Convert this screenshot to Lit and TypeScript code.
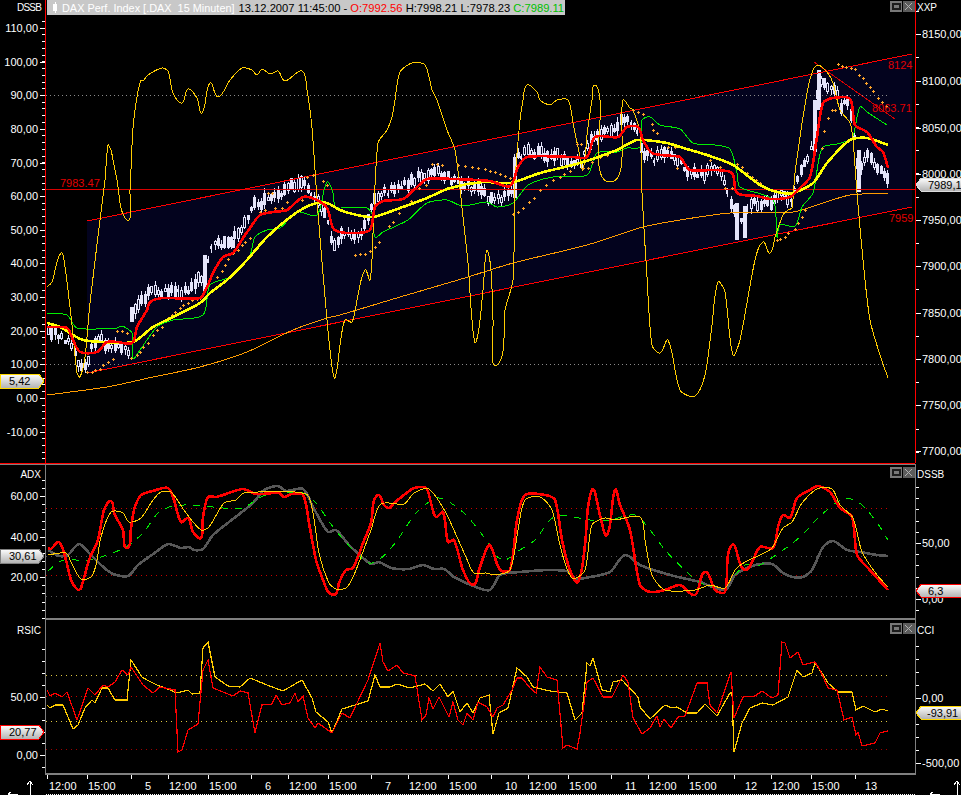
import { LitElement, html, svg, css } from 'lit';
import { customElement } from 'lit/decorators.js';

// all series are flat x,y lists in page pixels, read off the screenshot
const CHANNEL = [87, 221, 912, 54, 912, 207, 87, 373];

const CANDLE_MID = [47,333,60,335,70,345,77,366,85,362,92,345,100,340,115,350,122,345,128,355,130,313,135,307,147,293,173,290,187,292,203,273,210,245,223,245,240,230,253,203,267,202,293,185,303,183,317,200,327,223,333,250,337,238,347,233,353,240,363,228,372,200,383,193,400,188,417,177,430,173,440,173,453,180,473,188,487,197,497,198,510,193,513,160,527,152,553,155,567,160,580,165,588,143,597,133,613,130,623,117,637,130,640,150,653,160,663,153,677,158,683,170,697,175,713,170,720,177,735,217,742,223,745,207,757,202,770,205,780,193,790,200,795,180,808,157,813,117,818,80,827,87,835,90,840,107,848,103,852,130,857,170,867,153,878,172,887,180];
const TALL = [[203,255,291],[513,158,198],[735,203,240],[743,206,238],[813,100,152],[817,70,110],[857,150,192],[130,307,322],[231,240,248]];

const OSC = [47,287,52,282,61,253,65,267,72,325,77,373,80,377,85,357,90,303,100,220,105,180,108,145,111,150,113,160,117,180,127,220,130,190,133,128,137,97,141,80,143,81,148,75,162,68,168,71,173,93,182,103,188,89,197,98,202,113,210,83,218,97,230,80,242,68,252,70,257,75,262,69,270,74,278,71,285,81,302,71,307,90,312,128,318,213,327,320,332,367,335,378,340,345,345,320,352,322,358,295,365,270,370,280,373,233,378,143,387,130,392,117,395,100,400,72,412,63,425,65,432,90,437,100,447,130,455,150,463,217,468,263,472,320,476,342,483,290,488,252,493,320,497,365,505,310,513,280,515,183,520,120,523,100,527,85,537,92,540,100,550,105,557,100,568,100,573,123,580,157,583,170,587,135,592,100,595,85,600,100,610,182,623,100,630,108,633,110,640,133,642,193,647,277,652,345,660,353,668,340,680,390,695,396,705,375,712,325,718,282,725,292,733,355,740,340,755,260,763,242,770,253,775,237,783,215,788,210,792,208,795,173,807,93,813,70,818,65,827,72,833,83,840,110,850,123,853,140,857,193,863,260,870,320,880,355,888,378];

const MA_RED = [47,327,67,328,73,340,80,352,97,352,107,342,117,342,132,343,137,327,147,310,150,302,163,298,200,298,207,287,213,273,223,257,233,253,243,238,250,228,260,215,273,212,287,210,303,197,317,200,327,208,333,228,340,232,357,233,370,230,375,207,383,201,403,199,417,187,427,179,453,179,490,181,510,186,518,167,527,157,573,157,587,157,595,137,618,137,627,127,638,127,643,140,652,153,673,156,680,157,690,170,713,170,732,173,737,193,757,196,770,199,790,197,800,188,810,177,817,137,823,103,833,98,850,99,855,125,867,132,877,147,883,152,888,168];
const MA_YELLOW = [47,323,60,327,73,335,83,340,103,342,133,342,153,327,173,317,200,303,210,293,227,280,247,260,267,237,293,215,313,204,327,203,340,210,357,215,373,217,400,208,427,198,450,188,483,182,510,183,540,173,580,163,617,150,637,140,667,143,680,147,707,155,733,165,760,185,777,192,793,193,813,183,827,163,850,140,867,138,888,145];
const MA_GREEN = [47,313,67,315,77,328,117,328,122,326,132,333,133,358,140,350,157,327,173,320,203,315,210,285,230,277,250,255,255,237,267,230,280,228,297,212,317,215,327,182,333,193,335,207,340,208,367,208,373,217,375,237,383,232,408,220,427,203,447,200,462,206,487,202,497,207,513,203,528,185,553,177,587,175,597,153,617,152,627,148,640,147,642,120,650,117,660,125,680,129,693,143,715,145,730,149,737,173,740,187,773,200,777,237,780,225,795,226,802,207,813,193,822,148,837,144,852,138,860,107,867,112,887,125];
const MA_ORANGE = [47,395,107,387,153,377,200,367,247,352,293,330,327,318,340,315,400,297,458,280,468,277,513,263,587,245,643,227,680,220,730,213,793,212,823,203,850,195,888,193];

const SAR = [87,372,92,372,95,370,100,369,103,365,108,362,113,359,117,331,122,331,127,333,131,358,137,355,140,352,143,347,148,343,153,335,157,330,162,327,168,318,172,315,175,312,180,308,183,305,188,303,192,300,197,299,200,298,217,277,222,271,225,265,228,259,233,253,238,250,242,245,245,242,250,238,260,212,265,210,275,208,282,208,287,202,302,200,268,193,272,193,307,177,313,175,323,181,327,185,355,255,360,254,365,254,370,251,375,247,379,242,389,226,393,222,399,213,405,206,411,201,419,188,426,185,432,164,437,164,442,165,458,165,465,166,472,167,478,168,485,169,490,171,495,172,500,174,505,176,510,178,513,214,518,212,523,208,529,202,534,198,540,190,546,185,553,180,560,177,564,174,570,171,583,168,588,168,592,162,600,157,607,155,577,144,581,144,633,110,638,112,643,114,652,124,653,130,657,133,665,142,668,147,675,147,677,168,710,160,720,167,725,188,732,188,737,164,742,167,747,173,752,177,756,180,760,183,777,240,780,239,785,237,788,233,795,229,798,223,802,217,805,210,822,148,824,131,828,118,832,110,835,110,838,64,842,66,846,67,851,68,855,69,859,75,863,78,866,83,870,87,873,91,878,98,882,102,886,106];

const ADX_RED = [48,548,51,549,59,542,66,560,71,580,78,590,81,588,89,560,98,540,104,510,111,501,114,513,123,530,127,548,131,528,134,510,141,495,153,491,168,488,174,500,181,522,188,518,193,532,201,538,203,517,208,497,216,497,223,495,243,489,256,494,279,493,284,497,291,494,303,495,309,523,316,560,323,580,329,593,336,594,339,583,346,570,353,568,363,543,371,523,374,500,379,495,384,505,389,508,394,503,404,495,414,488,426,488,431,503,436,517,443,512,448,542,454,540,463,570,473,585,479,570,486,550,490,545,500,570,510,570,517,520,525,495,545,495,555,500,562,540,570,570,578,582,585,545,592,490,600,515,607,535,615,490,620,505,630,530,640,585,650,592,665,590,680,585,695,595,705,572,715,590,725,592,732,545,745,570,760,547,773,548,778,527,783,515,790,518,797,498,810,490,818,486,830,492,840,508,852,517,857,555,868,568,877,578,888,590];
const ADX_YELLOW = [48,555,66,553,71,562,81,579,91,577,96,565,101,537,111,512,123,513,129,522,141,518,153,500,161,492,171,492,186,513,201,530,209,527,224,503,236,500,244,493,306,494,313,513,319,553,329,583,336,589,346,588,354,575,371,530,381,504,404,504,414,493,429,489,446,513,453,528,466,557,474,573,486,573,495,575,510,570,518,530,525,500,540,497,552,510,560,545,572,578,585,570,592,525,605,518,615,520,640,517,645,540,652,575,665,590,695,590,710,585,725,588,735,570,745,562,760,555,772,548,783,528,792,522,802,503,817,489,832,489,840,505,853,518,862,552,877,575,888,587];
const ADX_GREEN = [48,571,59,562,69,559,84,561,104,556,126,547,143,533,159,512,173,506,193,505,223,508,243,508,259,498,273,493,303,493,316,503,333,527,353,550,369,563,379,560,396,542,416,513,436,498,449,502,466,515,486,540,495,555,505,560,520,550,535,540,550,520,560,515,590,520,610,520,635,515,650,530,665,550,690,575,705,585,725,585,745,565,760,565,770,559,783,550,793,543,807,530,818,518,833,505,843,499,855,500,867,510,880,527,888,540];
const ADX_GRAY = [48,550,59,556,68,555,79,544,89,553,101,565,113,574,128,576,138,565,156,552,168,544,181,548,189,547,194,550,203,549,213,535,229,522,253,503,264,490,278,486,286,491,303,489,313,507,328,532,336,530,349,545,371,564,379,562,391,568,409,569,423,565,434,569,444,569,454,577,476,587,490,590,500,575,520,572,550,570,570,572,575,579,585,578,610,572,625,555,640,565,670,575,700,582,725,590,735,575,755,565,772,564,783,573,793,577,803,577,812,570,823,547,833,541,847,550,860,552,877,555,888,556];

const RSI_YELLOW = [47,705,50,708,55,705,63,705,73,729,78,725,85,708,92,700,95,703,102,688,108,688,115,700,127,700,131,660,142,677,147,680,157,685,170,690,177,693,188,690,192,694,200,693,203,648,208,642,215,677,228,686,240,687,250,678,267,685,283,691,302,680,312,698,316,712,328,722,332,733,342,709,355,705,368,701,375,675,380,687,390,687,397,684,410,688,425,684,433,691,440,684,448,697,453,691,460,712,467,703,473,713,480,698,489,695,493,734,499,713,508,708,517,668,527,677,533,687,550,691,567,693,575,720,582,713,587,663,590,666,593,658,602,690,610,692,613,682,622,680,638,697,640,707,650,719,665,705,672,708,677,707,687,713,697,713,705,704,717,716,730,693,732,693,734,752,742,723,750,708,762,703,773,705,788,697,797,670,803,677,812,673,815,663,822,673,828,683,838,692,852,692,856,710,863,706,875,712,882,709,888,711];
const RSI_RED = [47,690,50,696,55,693,62,697,67,692,77,720,88,688,95,695,103,685,108,687,115,682,122,670,128,675,131,667,143,685,153,693,160,687,175,690,178,752,182,750,188,730,198,724,203,670,208,660,213,688,233,696,240,691,248,693,255,733,262,705,272,704,276,695,282,705,290,703,295,693,298,702,303,696,308,718,315,728,318,723,332,733,342,713,350,718,357,703,368,680,380,643,383,662,388,671,397,665,403,673,415,676,422,720,426,715,429,698,433,709,439,697,449,717,453,702,458,720,463,725,467,713,473,720,478,702,487,707,493,717,497,708,503,705,512,690,517,678,522,678,530,688,536,693,540,667,547,677,557,680,563,748,567,745,577,749,580,733,587,682,593,678,603,697,612,697,623,675,628,682,633,718,642,734,650,728,657,716,660,727,664,719,671,728,678,717,685,716,697,683,707,683,710,705,717,713,731,672,734,718,743,697,755,696,762,691,772,698,778,695,782,642,785,643,790,658,798,652,803,665,815,662,820,670,828,688,837,690,844,720,852,717,856,735,858,732,862,746,875,743,880,733,888,731];

const TIME_LABELS: [number, number, string][] = [
  [47, 49, '12:00'], [87, 88, '15:00'], [131, 145, '5'],
  [168, 169, '12:00'], [208, 209, '15:00'], [251, 265, '6'],
  [288, 289, '12:00'], [328, 329, '15:00'], [371, 385, '7'],
  [408, 409, '12:00'], [448, 449, '15:00'], [491, 505, '10'],
  [528, 529, '12:00'], [568, 569, '15:00'], [611, 625, '11'],
  [648, 649, '12:00'], [688, 689, '15:00'], [734, 745, '12'],
  [771, 772, '12:00'], [811, 812, '15:00'], [855, 865, '13'],
];

function flat(d: number[]) {
  const out: string[] = [];
  for (let i = 0; i < d.length; i += 2) out.push(d[i] + ',' + d[i + 1]);
  return out.join(' ');
}

// rounds off the hand read points, tangent length follows the segment so spikes don't overshoot
function smooth(d: number[]) {
  const n = d.length / 2;
  const tan = (i: number, len: number) => {
    const a = Math.max(i - 1, 0);
    const b = Math.min(i + 1, n - 1);
    const dx = d[b * 2] - d[a * 2];
    const dy = d[b * 2 + 1] - d[a * 2 + 1];
    const l = Math.hypot(dx, dy) || 1;
    return [(dx / l) * len * 0.25, (dy / l) * len * 0.25];
  };
  let p = `M${d[0]} ${d[1]}`;
  for (let i = 0; i < n - 1; i++) {
    const x0 = d[i * 2];
    const y0 = d[i * 2 + 1];
    const x1 = d[i * 2 + 2];
    const y1 = d[i * 2 + 3];
    const len = Math.hypot(x1 - x0, y1 - y0);
    const t0 = tan(i, len);
    const t1 = tan(i + 1, len);
    p += `C${(x0 + t0[0]).toFixed(1)} ${(y0 + t0[1]).toFixed(1)} ${(x1 - t1[0]).toFixed(1)} ${(y1 - t1[1]).toFixed(1)} ${x1} ${y1}`;
  }
  return p;
}

function yAt(d: number[], x: number) {
  for (let i = 0; i < d.length - 2; i += 2) {
    if (x <= d[i + 2]) {
      const t = (x - d[i]) / (d[i + 2] - d[i]);
      return d[i + 1] + (d[i + 3] - d[i + 1]) * t;
    }
  }
  return d[d.length - 1];
}

// evenly spaced values between two pixel rows, used for the minor ticks
function ticks(from: number, to: number, step: number) {
  const out: number[] = [];
  for (let y = from; y <= to; y += step) out.push(Math.round(y));
  return out;
}

function leftAxis(minor: number[], major: [number, string][]) {
  return svg`
    ${minor.map((y) => svg`<line class="tick" x1="42" x2="45" y1=${y} y2=${y}></line>`)}
    ${major.map(([y, t]) => svg`
      <line class="tick" x1="40" x2="45" y1=${y} y2=${y}></line>
      <text class="lbl" x="38" y=${y + 4} text-anchor="end">${t}</text>`)}`;
}

function rightAxis(minor: number[], major: [number, string][]) {
  return svg`
    ${minor.map((y) => svg`<line class="tick" x1="916" x2="919" y1=${y} y2=${y}></line>`)}
    ${major.map(([y, t]) => svg`
      <line class="tick" x1="916" x2="921" y1=${y} y2=${y}></line>
      <text class="lbl" x="922" y=${y + 4}>${t}</text>`)}`;
}

function leftTag(y: number, text: string, border: string) {
  const p = `0,${y} 39,${y} 44,${y + 7} 39,${y + 14} 0,${y + 14}`;
  return svg`<polygon points=${p} fill="url(#tag)" stroke=${border}></polygon>
    <text class="tag-text" x="9" y=${y + 11}>${text}</text>`;
}

function rightTag(y: number, text: string, textX: number, border: string) {
  const p = `961,${y} 921,${y} 916,${y + 7} 921,${y + 13} 961,${y + 13}`;
  return svg`<polygon points=${p} fill="url(#tag)" stroke=${border}></polygon>
    <text class="tag-text" x=${textX} y=${y + 11}>${text}</text>`;
}

function winButtons(y: number) {
  return svg`
    <rect class="btn" x="890" y=${y} width="12" height="11"></rect>
    <rect class="glyph" x="893" y=${y + 3} width="7" height="5"></rect>
    <rect class="btn2" x="903" y=${y} width="12" height="11"></rect>
    <path class="x-glyph" d="M905 ${y + 2}l7 7M912 ${y + 2}l-7 7"></path>`;
}

function dots(y: number, cls: string) {
  return svg`<line class=${cls} x1="46" x2="888" y1=${y} y2=${y}></line>`;
}

function candles() {
  let seed = 77;
  const rnd = () => {
    seed = (seed * 16807) % 2147483647;
    return (seed % 1000) / 1000;
  };
  const out = [];
  for (let x = 47; x < 889; x += 3.33) {
    const px = Math.round(x);
    const mid = yAt(CANDLE_MID, x) + (rnd() - 0.5) * 7;
    const h = 3 + rnd() * 9;
    const up = rnd() * 5;
    const dn = rnd() * 5;
    const w = h > 3.5 ? 3 : 2;
    out.push(svg`<rect class="wick" x=${px + 1} y=${mid - h / 2 - up} width="1" height=${h + up + dn}></rect>`);
    out.push(svg`<rect class="wick" x=${px} y=${mid - h / 2} width=${w} height=${h}></rect>`);
    if (w === 3 && rnd() < 0.35) out.push(svg`<rect class="hollow" x=${px + 1} y=${mid - h / 2 + 1} width="1" height=${Math.max(h - 2, 1)}></rect>`);
  }
  for (const [x, a, b] of TALL) {
    out.push(svg`<rect class="wick" x=${x} y=${a} width="4" height=${b - a}></rect>`);
  }
  return out;
}

const tagGradient = svg`
  <defs>
    <linearGradient id="tag" x1="0" y1="0" x2="0" y2="1">
      <stop offset="0" stop-color="#ffffff"></stop>
      <stop offset="1" stop-color="#b4b4b4"></stop>
    </linearGradient>
  </defs>`;

@customElement('app-root')
export class AppRoot extends LitElement {
  static styles = css`
    :host {
      display: block;
      width: 961px;
      height: 795px;
      background: #000;
      overflow: hidden;
      position: relative;
      font-family: 'Liberation Sans', Arial, sans-serif;
    }
    .screen {
      display: flex;
      flex-direction: column;
    }
    svg {
      display: block;
      shape-rendering: crispEdges;
    }
    /* title strip sits on top of the chart */
    .title {
      position: absolute;
      left: 47px;
      top: 0;
      width: 518px;
      height: 15px;
      background: #c8c8c8;
      display: flex;
      align-items: center;
      font-size: 11.2px;
      white-space: pre;
      color: #000;
      overflow: hidden;
    }
    .candle-icon {
      margin-left: 6px;
      margin-right: 5px;
      width: 4px;
      height: 7px;
      background: #fff;
      position: relative;
      flex: none;
    }
    .candle-icon::after {
      content: '';
      position: absolute;
      left: 1.5px;
      top: -2px;
      width: 1px;
      height: 11px;
      background: #fff;
    }
    .name { color: #fff; font-size: 10.9px; margin-right: 4px; }
    .o { color: #ff0000; }
    .c { color: #00c000; }

    text { shape-rendering: auto; }
    .lbl { font-size: 11px; fill: #fff; }
    .ttl { font-size: 10px; fill: #fff; }
    .ttl-narrow { font-size: 10px; fill: #fff; letter-spacing: -0.8px; }
    .tag-text { font-size: 11px; fill: #000; }
    .price { font-size: 11px; fill: #e00000; }
    .tick { stroke: #fff; }
    .frame-red { stroke: #ff0000; }
    .frame-gray { stroke: #808080; }
    .frame-gray2 { stroke: #808080; stroke-width: 2; }
    .band { fill: #03031e; }
    .chan { stroke: #ff0000; fill: none; }
    .chan-thin { stroke: #d80000; fill: none; }
    .dots-gray { stroke: #8a8a8a; stroke-dasharray: 1 3; }
    .dots-dark { stroke: #5a5a5a; stroke-dasharray: 1 4; }
    .dots-red { stroke: #c80000; stroke-dasharray: 1 4; }
    .dots-dkred { stroke: #a00000; stroke-dasharray: 1 4; }
    .dots-yellow { stroke: #e0c840; stroke-dasharray: 1 4; }
    .wick { fill: #e4e4fa; }
    .hollow { fill: #03031e; }
    .osc { fill: none; stroke: #ffcc00; stroke-width: 1; }
    .thin-yellow { fill: none; stroke: #ffcc00; stroke-width: 1.2; }
    .thick-red { fill: none; stroke: #ff0000; stroke-width: 2.6; stroke-linejoin: round; }
    .med-red { fill: none; stroke: #ff0000; stroke-width: 1.2; }
    .thick-yellow { fill: none; stroke: #ffff00; stroke-width: 2.6; stroke-linejoin: round; }
    .thin-green { fill: none; stroke: #00ee00; stroke-width: 1; }
    .dash-green { fill: none; stroke: #00ee00; stroke-width: 1; stroke-dasharray: 7 7; }
    .thin-orange { fill: none; stroke: #ff9c00; stroke-width: 1; }
    .thick-gray { fill: none; stroke: #585858; stroke-width: 2.6; stroke-linejoin: round; }
    .sar { fill: none; stroke: #ffa428; stroke-width: 1; }
    .btn { fill: #787878; }
    .btn2 { fill: #5c5c5c; }
    .glyph { fill: none; stroke: #1c1c1c; stroke-width: 1.5; }
    .x-glyph { fill: none; stroke: #b0b0b0; }
    .arrow { fill: none; stroke: #fff; }
    .base { stroke: #fff; stroke-dasharray: 1 1; }
  `;

  private sarMarks() {
    const out = [];
    for (let i = 0; i < SAR.length; i += 2) {
      const x = SAR[i];
      const y = SAR[i + 1];
      out.push(svg`<path class="sar" d="M${x - 1} ${y}h3M${x} ${y - 1}v3"></path>`);
    }
    return out;
  }

  private mainPanel() {
    return svg`
      <svg width="961" height="464" viewBox="0 0 961 464">
        ${tagGradient}
        <polygon class="band" points=${flat(CHANNEL)}></polygon>
        ${dots(95, 'dots-gray')}
        ${dots(364, 'dots-gray')}
        ${candles()}
        <line class="chan-thin" x1="46" x2="915" y1="189" y2="189"></line>
        <line class="chan" x1="87" y1="221" x2="912" y2="54"></line>
        <line class="chan" x1="87" y1="373" x2="912" y2="207"></line>
        <line class="chan-thin" x1="814" y1="62" x2="895" y2="119"></line>
        <path class="thin-orange" d=${smooth(MA_ORANGE)}></path>
        <path class="thin-green" d=${smooth(MA_GREEN)}></path>
        <path class="osc" d=${smooth(OSC)}></path>
        ${this.sarMarks()}
        <path class="thick-yellow" d=${smooth(MA_YELLOW)}></path>
        <path class="thick-red" d=${smooth(MA_RED)}></path>
        <text class="price" x="60" y="187">7983.47</text>
        <text class="price" x="888" y="69">8124</text>
        <text class="price" x="872" y="112">8063.71</text>
        <text class="price" x="889" y="222">7959</text>
        <line class="frame-red" x1="45" x2="45" y1="0" y2="463"></line>
        <line class="frame-red" x1="915" x2="915" y1="0" y2="463"></line>
        <line class="frame-red" x1="0" x2="915" y1="463" y2="463"></line>
        ${leftAxis(
          ticks(21, 460, 6.73),
          [[28,'110,00'],[62,'100,00'],[95,'90,00'],[129,'80,00'],[163,'70,00'],[196,'60,00'],[230,'50,00'],[263,'40,00'],[297,'30,00'],[331,'20,00'],[364,'10,00'],[398,'0,00'],[432,'-10,00']],
        )}
        ${rightAxis(
          ticks(11, 460, 23.2),
          [[34,'8150,00'],[81,'8100,00'],[128,'8050,00'],[174,'8000,00'],[220,'7950,00'],[266,'7900,00'],[313,'7850,00'],[359,'7800,00'],[405,'7750,00'],[451,'7700,00']],
        )}
        <text class="ttl-narrow" x="17" y="11">DSSB</text>
        <text class="ttl" x="917" y="11">XXP</text>
        ${leftTag(374, '5,42', '#ffd800')}
        ${rightTag(178, '7989,1', 928, '#dcdcdc')}
        ${winButtons(1)}
      </svg>`;
  }

  private adxPanel() {
    return svg`
      <svg width="961" height="156" viewBox="0 464 961 156">
        ${dots(508, 'dots-red')}
        ${dots(556, 'dots-dark')}
        ${dots(575, 'dots-red')}
        ${dots(596, 'dots-dark')}
        <path class="thick-gray" d=${smooth(ADX_GRAY)}></path>
        <path class="dash-green" d=${smooth(ADX_GREEN)}></path>
        <path class="thick-red" d=${smooth(ADX_RED)}></path>
        <path class="osc" d=${smooth(ADX_YELLOW)}></path>
        <line class="frame-gray" x1="0" x2="915" y1="464" y2="464"></line>
        <line class="frame-gray" x1="45" x2="45" y1="464" y2="620"></line>
        <line class="frame-gray" x1="915" x2="915" y1="464" y2="620"></line>
        <line class="frame-gray2" x1="46" x2="915" y1="619" y2="619"></line>
        ${leftAxis(ticks(480, 618, 8.1), [[496,'60,00'],[537,'40,00'],[577,'20,00']])}
        ${rightAxis(ticks(487, 611, 11.2), [[543,'50,00'],[599,'0,00']])}
        <text class="ttl" x="41" y="478" text-anchor="end">ADX</text>
        <text class="ttl" x="917" y="478">DSSB</text>
        ${leftTag(549, '30,61', '#808080')}
        ${rightTag(584, '6,3', 928, '#ff0000')}
        ${winButtons(467)}
      </svg>`;
  }

  private rsiPanel() {
    return svg`
      <svg width="961" height="155" viewBox="0 620 961 155">
        ${dots(675, 'dots-yellow')}
        ${dots(696, 'dots-red')}
        ${dots(721, 'dots-yellow')}
        ${dots(749, 'dots-dkred')}
        <polyline class="thin-yellow" points=${flat(RSI_YELLOW)}></polyline>
        <polyline class="med-red" points=${flat(RSI_RED)}></polyline>
        <line class="frame-gray" x1="45" x2="45" y1="620" y2="775"></line>
        <line class="frame-gray" x1="915" x2="915" y1="620" y2="775"></line>
        <line class="frame-gray2" x1="46" x2="915" y1="774" y2="774"></line>
        ${leftAxis([649,661,673,685,708,720,732,743,767], [[697,'50,00'],[755,'0,00']])}
        ${rightAxis([646,659,672,685,711,724,737,750], [[698,'0,00'],[763,'-500,00']])}
        <text class="ttl" x="41" y="634" text-anchor="end">RSIC</text>
        <text class="ttl" x="917" y="634">CCI</text>
        ${leftTag(725, '20,77', '#ff0000')}
        ${rightTag(706, '-93,91', 927, '#ffd800')}
        ${winButtons(623)}
      </svg>`;
  }

  private timeAxis() {
    return svg`
      <svg width="961" height="20" viewBox="0 775 961 20">
        ${TIME_LABELS.map(([tick, x, t]) => svg`
          <line class="tick" x1=${tick} x2=${tick} y1="775" y2="779"></line>
          <text class="lbl" x=${x} y="790">${t}</text>`)}
        <line class="base" x1="46" x2="915" y1="794" y2="794"></line>
        <path class="arrow" d="M30 795V781M27 785l3-4 3 4"></path>
        <path class="arrow" d="M8 794h10M8 794l3-2"></path>
        <path class="arrow" d="M957 795V781M954 785l3-4 3 4"></path>
        <path class="arrow" d="M930 794h10M930 794l3-2"></path>
      </svg>`;
  }

  render() {
    return html`
      <div class="screen">
        ${this.mainPanel()} ${this.adxPanel()} ${this.rsiPanel()} ${this.timeAxis()}
      </div>
      <div class="title">
        <span class="candle-icon"></span><span class="name">DAX Perf. Index [.DAX  15 Minuten]</span><span>13.12.2007 11:45:00 - </span><span class="o">O:7992.56 </span><span>H:7998.21 L:7978.23 </span><span class="c">C:7989.11</span>
      </div>
    `;
  }
}
